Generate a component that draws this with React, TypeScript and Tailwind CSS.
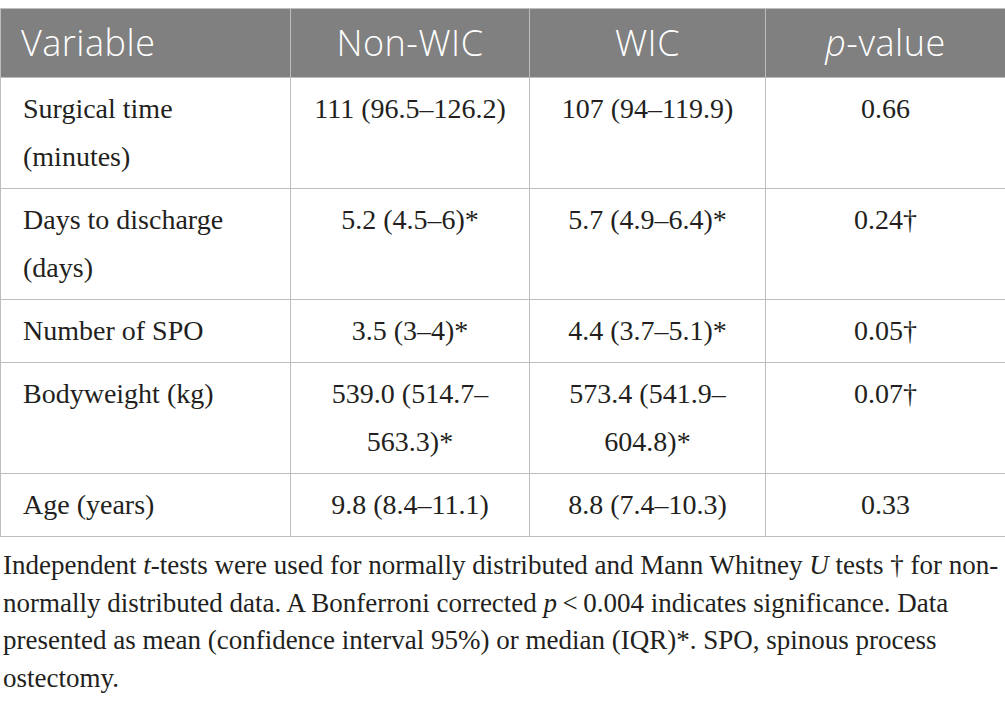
const rows = [
  { label: ["Surgical time", "(minutes)"], a: "111 (96.5–126.2)", b: "107 (94–119.9)", p: "0.66" },
  { label: ["Days to discharge", "(days)"], a: "5.2 (4.5–6)*", b: "5.7 (4.9–6.4)*", p: "0.24†" },
  { label: ["Number of SPO"], a: "3.5 (3–4)*", b: "4.4 (3.7–5.1)*", p: "0.05†" },
  { label: ["Bodyweight (kg)"], a: "539.0 (514.7–563.3)*", b: "573.4 (541.9–604.8)*", p: "0.07†" },
  { label: ["Age (years)"], a: "9.8 (8.4–11.1)", b: "8.8 (7.4–10.3)", p: "0.33" },
];

export default function App() {
  return (
    <div className="w-[1005px] h-[703px] bg-white pt-2 overflow-hidden">
      <table className="w-[1005px] border-collapse table-fixed text-[#231f20]">
        <colgroup>
          <col className="w-[290px]" />
          <col className="w-[239px]" />
          <col className="w-[236px]" />
          <col className="w-[240px]" />
        </colgroup>
        <thead>
          <tr className="bg-[#808080] text-white font-['Open_Sans',sans-serif] text-[36px] tracking-[0.5px]">
            <th className="h-[69px] border border-[#bdbdbd] text-left pl-[20px] font-light">Variable</th>
            <th className="border border-[#bdbdbd] text-center font-light">Non-WIC</th>
            <th className="border border-[#bdbdbd] text-center font-light">WIC</th>
            <th className="border border-[#bdbdbd] text-center font-light">
              <i>p</i>-value
            </th>
          </tr>
        </thead>
        <tbody className="font-['Liberation_Serif',serif] text-[28px] leading-[48px]">
          {rows.map((r, i) => (
            <tr key={i}>
              <td className="border border-[#bdbdbd] align-top pl-[22px] pr-2 py-[7px]">
                {r.label.map((l, j) => (
                  <div key={j}>{l}</div>
                ))}
              </td>
              <td className="border border-[#bdbdbd] align-top text-center px-4 py-[7px]">{r.a}</td>
              <td className="border border-[#bdbdbd] align-top text-center px-4 py-[7px]">{r.b}</td>
              <td className="border border-[#bdbdbd] align-top text-center px-4 py-[7px]">{r.p}</td>
            </tr>
          ))}
        </tbody>
      </table>
      {/* footnote */}
      <p className="mt-[10px] pl-[3px] pr-[2px] font-['Liberation_Serif',serif] text-[27px] leading-[37.5px] text-[#231f20]">
        Independent <i>t</i>-tests were used for normally distributed and Mann Whitney <i>U</i> tests † for non-normally
        distributed data. A Bonferroni corrected <i>p</i>{"\u2009<\u2009"}0.004 indicates significance. Data presented as
        mean (confidence interval 95%) or median (IQR)*. SPO, spinous process ostectomy.
      </p>
    </div>
  );
}
